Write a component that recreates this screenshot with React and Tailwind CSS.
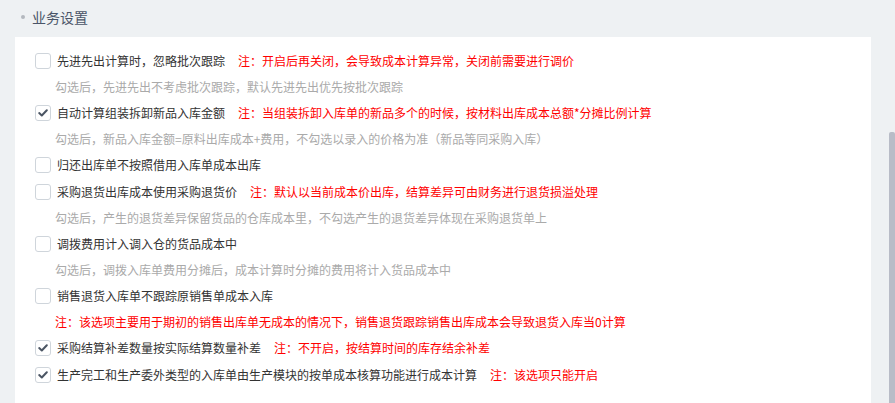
const items = [
  {
    label: '先进先出计算时，忽略批次跟踪',
    note: '注：开启后再关闭，会导致成本计算异常，关闭前需要进行调价',
    desc: '勾选后，先进先出不考虑批次跟踪，默认先进先出优先按批次跟踪',
  },
  {
    label: '自动计算组装拆卸新品入库金额',
    checked: true,
    note: '注：当组装拆卸入库单的新品多个的时候，按材料出库成本总额*分摊比例计算',
    desc: '勾选后，新品入库金额=原料出库成本+费用，不勾选以录入的价格为准（新品等同采购入库）',
  },
  { label: '归还出库单不按照借用入库单成本出库' },
  {
    label: '采购退货出库成本使用采购退货价',
    note: '注：默认以当前成本价出库，结算差异可由财务进行退货损溢处理',
    desc: '勾选后，产生的退货差异保留货品的仓库成本里，不勾选产生的退货差异体现在采购退货单上',
  },
  {
    label: '调拨费用计入调入仓的货品成本中',
    desc: '勾选后，调拨入库单费用分摊后，成本计算时分摊的费用将计入货品成本中',
  },
  {
    label: '销售退货入库单不跟踪原销售单成本入库',
    redDesc: '注：该选项主要用于期初的销售出库单无成本的情况下，销售退货跟踪销售出库成本会导致退货入库当0计算',
  },
  {
    label: '采购结算补差数量按实际结算数量补差',
    checked: true,
    note: '注：不开启，按结算时间的库存结余补差',
  },
  {
    label: '生产完工和生产委外类型的入库单由生产模块的按单成本核算功能进行成本计算',
    checked: true,
    note: '注：该选项只能开启',
  },
];

function Checkbox({ checked }) {
  return (
    <span className="flex h-4 w-4 shrink-0 items-center justify-center rounded-[3px] border border-[#cfd5db] bg-white">
      {checked && (
        <svg width="10" height="8" viewBox="0 0 10 8">
          <path d="M1.2 4.1 L3.8 6.5 L8.8 1.3" fill="none" stroke="#4b5563" strokeWidth="2" strokeLinecap="round" strokeLinejoin="round" />
        </svg>
      )}
    </span>
  );
}

export default function App() {
  return (
    <div
      className="flex h-[403px] w-[895px] overflow-hidden bg-[#eef1f3] text-[12px]"
      style={{ fontFamily: '"Noto Sans CJK SC", "Noto Sans", sans-serif' }}
    >
      <div className="flex flex-1 flex-col pl-[15px] pr-[18px]">
        <div className="flex h-[37px] items-center gap-[7px] pb-[3px] pl-[6px]">
          <span className="h-[4px] w-[4px] rounded-full bg-[#b3b8be]" />
          <span className="text-[14px] text-[#4a5568]">业务设置</span>
        </div>
        <div className="flex-1 bg-white pl-[20px] pt-[10px]">
          {items.map((item) => (
            <div key={item.label}>
              <div className="flex h-[27px] items-center">
                <Checkbox checked={item.checked} />
                <span className="ml-[6px] text-[#333]">{item.label}</span>
                {item.note && <span className="ml-[13px] text-[#ff0000]">{item.note}</span>}
              </div>
              {item.desc && (
                <div className="flex h-[25px] items-center pl-[20px] text-[#aaaaaa]">{item.desc}</div>
              )}
              {item.redDesc && (
                <div className="flex h-[25px] items-center pl-[20px] text-[#ff0000]">{item.redDesc}</div>
              )}
            </div>
          ))}
        </div>
      </div>
      <div className="flex w-[6px] flex-col pt-[132px]">
        <div className="flex-1 rounded-t-[2px] bg-[#b8bcc7]" />
      </div>
    </div>
  );
}
